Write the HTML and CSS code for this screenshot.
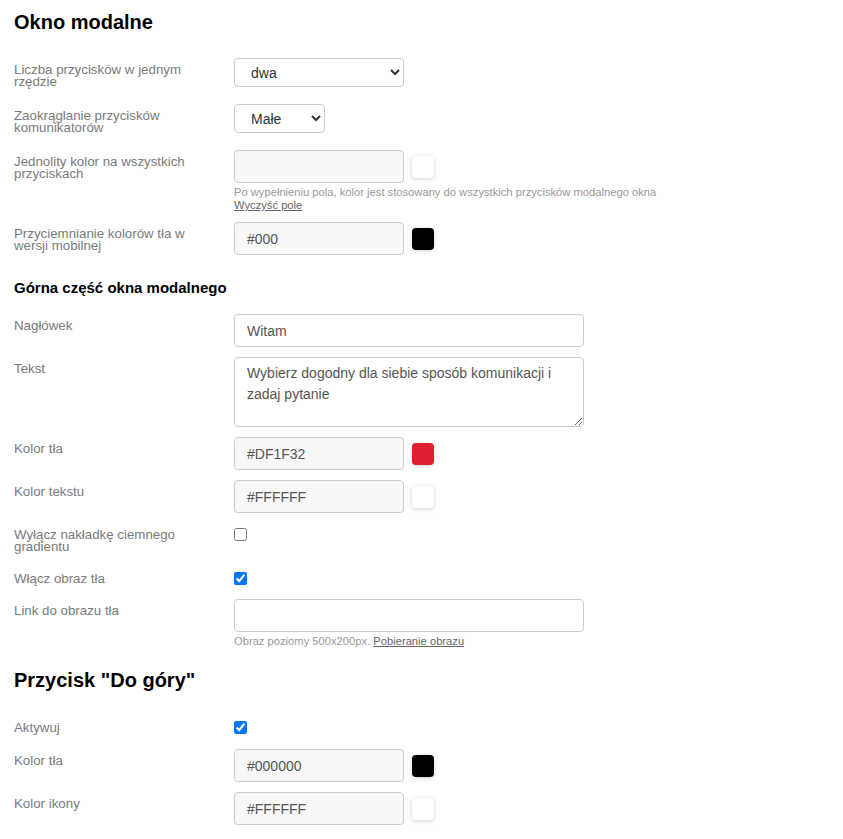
FILE: index.html
```html
<!DOCTYPE html>
<html lang="pl">
<head>
  <meta charset="UTF-8">
  <meta name="viewport" content="width=device-width, initial-scale=1">
  <title>Okno modalne</title>
  <link rel="stylesheet" href="styles.css">
</head>
<body>
  <main class="settings">
    <h1 class="section-title">Okno modalne</h1>

    <div class="field field-select">
      <label class="field-label">Liczba przycisków w jednym rzędzie</label>
      <div class="field-control">
        <select class="select select-wide"><option>dwa</option></select>
      </div>
    </div>

    <div class="field field-select">
      <label class="field-label">Zaokrąglanie przycisków komunikatorów</label>
      <div class="field-control">
        <select class="select select-narrow"><option>Małe</option></select>
      </div>
    </div>

    <div class="field">
      <label class="field-label">Jednolity kolor na wszystkich przyciskach</label>
      <div class="field-control">
        <div class="color-picker">
          <input class="input input-color" type="text" value="">
          <span class="swatch swatch-white"></span>
        </div>
        <p class="help">Po wypełnieniu pola, kolor jest stosowany do wszystkich przycisków modalnego okna<br><a href="#">Wyczyść pole</a></p>
      </div>
    </div>

    <div class="field">
      <label class="field-label">Przyciemnianie kolorów tła w wersji mobilnej</label>
      <div class="field-control">
        <div class="color-picker">
          <input class="input input-color" type="text" value="#000">
          <span class="swatch swatch-black"></span>
        </div>
      </div>
    </div>

    <h3 class="subsection-title">Górna część okna modalnego</h3>

    <div class="field">
      <label class="field-label">Nagłówek</label>
      <div class="field-control">
        <input class="input input-wide" type="text" value="Witam">
      </div>
    </div>

    <div class="field">
      <label class="field-label">Tekst</label>
      <div class="field-control">
        <textarea class="textarea">Wybierz dogodny dla siebie sposób komunikacji i zadaj pytanie</textarea>
      </div>
    </div>

    <div class="field">
      <label class="field-label">Kolor tła</label>
      <div class="field-control">
        <div class="color-picker">
          <input class="input input-color" type="text" value="#DF1F32">
          <span class="swatch swatch-red"></span>
        </div>
      </div>
    </div>

    <div class="field">
      <label class="field-label">Kolor tekstu</label>
      <div class="field-control">
        <div class="color-picker">
          <input class="input input-color" type="text" value="#FFFFFF">
          <span class="swatch swatch-white"></span>
        </div>
      </div>
    </div>

    <div class="field field-check">
      <label class="field-label">Wyłącz nakładkę ciemnego gradientu</label>
      <div class="field-control">
        <input class="checkbox" type="checkbox">
      </div>
    </div>

    <div class="field field-check">
      <label class="field-label">Włącz obraz tła</label>
      <div class="field-control">
        <input class="checkbox" type="checkbox" checked>
      </div>
    </div>

    <div class="field">
      <label class="field-label">Link do obrazu tła</label>
      <div class="field-control">
        <input class="input input-wide" type="text" value="">
        <p class="help help-short">Obraz poziomy 500x200px. <a href="#">Pobieranie obrazu</a></p>
      </div>
    </div>

    <h1 class="section-title section-title-next">Przycisk "Do góry"</h1>

    <div class="field field-check field-check-last">
      <label class="field-label">Aktywuj</label>
      <div class="field-control">
        <input class="checkbox" type="checkbox" checked>
      </div>
    </div>

    <div class="field">
      <label class="field-label">Kolor tła</label>
      <div class="field-control">
        <div class="color-picker">
          <input class="input input-color" type="text" value="#000000">
          <span class="swatch swatch-black"></span>
        </div>
      </div>
    </div>

    <div class="field">
      <label class="field-label">Kolor ikony</label>
      <div class="field-control">
        <div class="color-picker">
          <input class="input input-color" type="text" value="#FFFFFF">
          <span class="swatch swatch-white"></span>
        </div>
      </div>
    </div>
  </main>
</body>
</html>
```

FILE: styles.css
```css
:root {
  --label: #7a7a7a;
  --border: #ccc;
  --input-text: #555;
  --field-bg: #f8f8f8;
}
* { box-sizing: border-box; }
body {
  margin: 0;
  padding: 10px 14px;
  font-family: "Liberation Sans", Arial, sans-serif;
  background: #fff;
  color: #000;
}
.section-title {
  margin: 0 0 24px;
  font-size: 20px;
  line-height: 24px;
  font-weight: bold;
}
.section-title-next { margin-top: 20px; }
.subsection-title {
  margin: 24px 0 17px;
  font-size: 15px;
  line-height: 18px;
  font-weight: bold;
}
.field {
  display: flex;
  align-items: flex-start;
  margin-bottom: 10px;
}
.field-select { margin-bottom: 16px; }
.field-check { margin-bottom: 14px; }
.field-check-last { margin-bottom: 15px; }
.field-label {
  flex: 0 0 190px;
  margin-right: 30px;
  padding-top: 6px;
  font-size: 13.3px;
  line-height: 12px;
  color: var(--label);
}
.field-control {
  display: flex;
  flex-direction: column;
  align-items: flex-start;
}
.select {
  height: 29px;
  padding: 0 8px 0 12px;
  border: 1px solid var(--border);
  border-radius: 4px;
  background: #fff;
  font: 14px "Liberation Sans", Arial, sans-serif;
  color: #333;
}
.select-wide { width: 170px; }
.select-narrow { width: 91px; }
.input {
  height: 33px;
  padding: 0 12px;
  border: 1px solid var(--border);
  border-radius: 4px;
  background: #fff;
  font: 14px "Liberation Sans", Arial, sans-serif;
  color: var(--input-text);
  outline: none;
}
.input-color {
  width: 170px;
  background: var(--field-bg);
}
.input-wide { width: 350px; }
.textarea {
  width: 350px;
  height: 70px;
  padding: 5px 12px;
  border: 1px solid var(--border);
  border-radius: 4px;
  font: 14px/21px "Liberation Sans", Arial, sans-serif;
  color: var(--input-text);
  resize: vertical;
}
.color-picker {
  display: flex;
  align-items: center;
  gap: 8px;
}
.swatch {
  width: 22px;
  height: 22px;
  border-radius: 4px;
  box-shadow: 0 1px 4px rgba(0, 0, 0, 0.18);
}
.swatch-white { background: #fff; }
.swatch-black { background: #000; }
.swatch-red { background: #df1f32; }
.checkbox {
  width: 13px;
  height: 13px;
  margin: 5px 0 0;
}
.help {
  margin: 3px 0 0;
  font-size: 11.2px;
  line-height: 13px;
  color: #999;
}
.help a {
  color: #666;
  text-decoration: underline;
}
```
